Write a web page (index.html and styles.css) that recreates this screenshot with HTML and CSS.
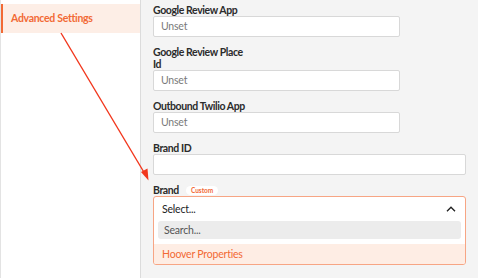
FILE: index.html
```html
<!DOCTYPE html>
<html lang="en">
<head>
    <meta charset="UTF-8">
    <meta name="viewport" content="width=device-width, initial-scale=1.0">
    <title>Advanced Settings</title>
    <link rel="stylesheet" href="styles.css">
</head>
<body>
    <div class="sidebar">
        <div class="nav-item active">Advanced Settings</div>
    </div>

    <div class="content">
        <div class="field">
            <label>Google Review App</label>
            <div class="input short">Unset</div>
        </div>

        <div class="field">
            <label class="narrow">Google Review Place Id</label>
            <div class="input short">Unset</div>
        </div>

        <div class="field">
            <label>Outbound Twilio App</label>
            <div class="input short">Unset</div>
        </div>

        <div class="field">
            <label>Brand ID</label>
            <div class="input wide"></div>
        </div>

        <div class="field">
            <div class="label-row">
                <label>Brand</label>
                <span class="badge">Custom</span>
            </div>
            <div class="select open">
                <div class="select-head">
                    <span>Select...</span>
                    <svg class="chevron" width="10" height="6" viewBox="0 0 10 6">
                        <path d="M1 5.2 L5 1.2 L9 5.2" fill="none" stroke="#222" stroke-width="1.4"/>
                    </svg>
                </div>
                <div class="search">Search...</div>
                <div class="option">Hoover Properties</div>
            </div>
        </div>
    </div>

    <!-- annotation arrow -->
    <svg class="arrow" width="478" height="278" viewBox="0 0 478 278">
        <line x1="61" y1="33" x2="145" y2="174" stroke="#f2361c" stroke-width="1.4"/>
        <polygon points="148.5,180.5 141,172 147.5,168.5" fill="#f2361c"/>
    </svg>
</body>
</html>
```

FILE: styles.css
```css
body {
    margin: 0;
    display: flex;
    height: 278px;
    font-family: "Lato", "Noto Sans", sans-serif;
    color: #2b2b2b;
    overflow: hidden;
}

/* Sidebar */
.sidebar {
    width: 139px;
    background: #fff;
    border-left: 1px solid #e3e3e3;
    border-right: 1px solid #dcdcdc;
    padding-top: 4px;
    flex-shrink: 0;
}

.nav-item {
    height: 29px;
    line-height: 29px;
    padding-left: 8px;
    font-size: 10.5px;
    font-weight: bold;
    letter-spacing: -0.3px;
}

.nav-item.active {
    border-left: 2px solid #f26a35;
    background: #fdeee6;
    color: #f26a35;
}

/* Form */
.content {
    flex: 1;
    background: #f4f4f4;
    padding: 4px 12px 0;
}

.field {
    margin-bottom: 9px;
}

label {
    display: block;
    font-size: 10.5px;
    font-weight: bold;
    line-height: 12px;
    letter-spacing: -0.4px;
    color: #2b2b2b;
}

label.narrow {
    max-width: 90px;
}

.input {
    box-sizing: border-box;
    height: 21px;
    line-height: 19px;
    padding-left: 7px;
    background: #fff;
    border: 1px solid #d8d8d8;
    border-radius: 2px;
    font-size: 10.5px;
    letter-spacing: -0.2px;
    color: #7a7a7a;
}

.input.short {
    width: 247px;
}

.input.wide {
    width: 313px;
}

.label-row {
    display: flex;
    align-items: center;
    gap: 7px;
}

.badge {
    background: #fff;
    color: #f26a35;
    font-size: 6.5px;
    font-weight: bold;
    line-height: 9px;
    padding: 0 5px;
    border-radius: 5px;
}

/* Dropdown */
.select {
    box-sizing: border-box;
    width: 313px;
    background: #fff;
    border: 1px solid #f7a584;
    border-radius: 3px;
    overflow: hidden;
}

.select-head {
    display: flex;
    justify-content: space-between;
    align-items: center;
    height: 24px;
    padding: 0 9px 0 8px;
    font-size: 10.5px;
    letter-spacing: -0.2px;
    color: #222;
}

.search {
    margin: 0 4px;
    height: 18px;
    line-height: 18px;
    padding-left: 6px;
    background: #ececec;
    border-radius: 3px;
    font-size: 10.5px;
    letter-spacing: -0.2px;
    color: #555;
}

.option {
    margin-top: 5px;
    height: 20px;
    line-height: 20px;
    padding-left: 8px;
    background: #feede4;
    color: #f26a35;
    font-size: 10.5px;
    letter-spacing: -0.2px;
}

.arrow {
    position: absolute;
    top: 0;
    left: 0;
    pointer-events: none;
}
```
